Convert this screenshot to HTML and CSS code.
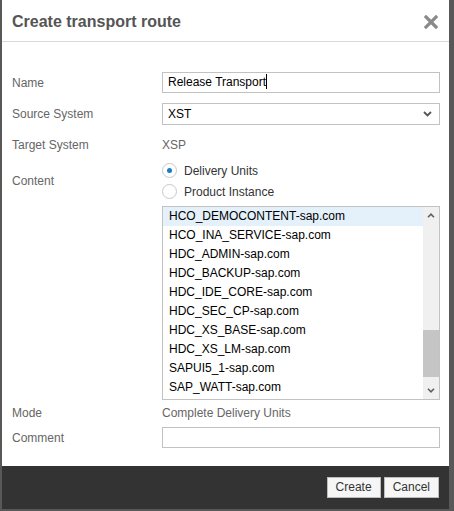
FILE: index.html
```html
<!DOCTYPE html>
<html>
<head>
<meta charset="utf-8">
<link rel="stylesheet" href="styles.css">
</head>
<body>
<div class="dialog">
  <div class="header">
    <div class="title">Create transport route</div>
    <svg class="close" width="14" height="14" viewBox="0 0 14 14"><path d="M2 2 L12 12 M12 2 L2 12" stroke="#8a8a8a" stroke-width="3.2" stroke-linecap="square" fill="none"/></svg>
  </div>
  <div class="body">
    <div class="row r-name">
      <div class="label">Name</div>
      <div class="field"><div class="input">Release Transport<span class="caret"></span></div></div>
    </div>
    <div class="row r-source">
      <div class="label">Source System</div>
      <div class="field"><div class="select"><span>XST</span><svg width="9" height="6" viewBox="0 0 9 6"><path d="M1 1 L4.5 4.5 L8 1" stroke="#555" stroke-width="1.8" fill="none"/></svg></div></div>
    </div>
    <div class="row r-target">
      <div class="label">Target System</div>
      <div class="field value">XSP</div>
    </div>
    <div class="row r-content">
      <div class="label label-content">Content</div>
      <div class="field">
        <div class="radio"><span class="dot on"></span><span>Delivery Units</span></div>
        <div class="radio"><span class="dot"></span><span>Product Instance</span></div>
        <div class="listbox">
          <div class="items">
            <div class="item sel">HCO_DEMOCONTENT-sap.com</div>
            <div class="item">HCO_INA_SERVICE-sap.com</div>
            <div class="item">HDC_ADMIN-sap.com</div>
            <div class="item">HDC_BACKUP-sap.com</div>
            <div class="item">HDC_IDE_CORE-sap.com</div>
            <div class="item">HDC_SEC_CP-sap.com</div>
            <div class="item">HDC_XS_BASE-sap.com</div>
            <div class="item">HDC_XS_LM-sap.com</div>
            <div class="item">SAPUI5_1-sap.com</div>
            <div class="item">SAP_WATT-sap.com</div>
          </div>
          <div class="scrollbar">
            <div class="arrow"><svg width="8" height="5" viewBox="0 0 8 5"><path d="M1 4.2 L4 1.2 L7 4.2" stroke="#606060" stroke-width="1.6" fill="none"/></svg></div>
            <div class="track"><div class="thumb"></div></div>
            <div class="arrow"><svg width="8" height="5" viewBox="0 0 8 5"><path d="M1 0.8 L4 3.8 L7 0.8" stroke="#606060" stroke-width="1.6" fill="none"/></svg></div>
          </div>
        </div>
      </div>
    </div>
    <div class="row r-mode">
      <div class="label">Mode</div>
      <div class="field value">Complete Delivery Units</div>
    </div>
    <div class="row r-comment">
      <div class="label">Comment</div>
      <div class="field"><div class="input"></div></div>
    </div>
  </div>
  <div class="footer">
    <button class="btn">Create</button>
    <button class="btn">Cancel</button>
  </div>
</div>
</body>
</html>
```
FILE: styles.css
```css
html, body {
  margin: 0;
  padding: 0;
  background: #fff;
}
body {
  font-family: "Liberation Sans", Arial, sans-serif;
  font-size: 12px;
}
.dialog {
  width: 454px;
  height: 511px;
  box-sizing: border-box;
  border-left: 2px solid #585858;
  border-right: 5px solid #585858;
  border-bottom: 2px solid #585858;
  display: flex;
  flex-direction: column;
  background: #fff;
}
.header {
  height: 41px;
  flex: none;
  border-bottom: 1px solid #d9d9d9;
  display: flex;
  align-items: center;
  justify-content: space-between;
  padding: 3px 11px 0 10px;
  box-sizing: content-box;
  height: 38px;
}
.title {
  font-size: 16px;
  font-weight: bold;
  color: #555;
}
.close {
  display: block;
}
.body {
  flex: 1;
  padding: 30px 9px 0 10px;
}
.row {
  display: flex;
  align-items: center;
}
.label {
  width: 150px;
  flex: none;
  color: #666;
}
.field {
  flex: 1;
  min-width: 0;
}
.value {
  color: #666;
}
.input {
  height: 21px;
  box-sizing: border-box;
  border: 1px solid #c2c2c2;
  padding: 0 5px;
  line-height: 19px;
  color: #000;
}
.caret {
  display: inline-block;
  width: 1px;
  height: 15px;
  background: #000;
  vertical-align: -3px;
}
.select {
  height: 22px;
  box-sizing: border-box;
  border: 1px solid #c2c2c2;
  padding: 0 7px 0 5px;
  display: flex;
  align-items: center;
  justify-content: space-between;
  color: #000;
}
.r-name { height: 21px; }
.r-source { height: 22px; margin-top: 10px; }
.r-target { height: 19px; margin-top: 10px; }
.r-content { margin-top: 6px; align-items: flex-start; }
.label-content { margin-top: 11px; line-height: 20px; }
.r-mode { height: 19px; margin-top: 3px; }
.r-comment { height: 21px; margin-top: 5px; }
.radio {
  height: 21px;
  display: flex;
  align-items: center;
  color: #333;
}
.dot {
  width: 15px;
  height: 15px;
  box-sizing: border-box;
  border: 1px solid #c8c8c8;
  border-radius: 50%;
  background: #fff;
  margin-right: 7px;
  display: flex;
  align-items: center;
  justify-content: center;
}
.dot.on::after {
  content: "";
  width: 5px;
  height: 5px;
  border-radius: 50%;
  background: #1a7cc4;
}
.listbox {
  margin-top: 4px;
  height: 194px;
  box-sizing: border-box;
  border: 1px solid #c2c2c2;
  display: flex;
  overflow: hidden;
}
.items {
  flex: 1;
  min-width: 0;
}
.item {
  height: 19px;
  line-height: 19px;
  padding-left: 6px;
  color: #000;
  white-space: nowrap;
}
.item.sel {
  background: #e4f0fa;
}
.scrollbar {
  width: 16px;
  flex: none;
  background: #f0f0f0;
  display: flex;
  flex-direction: column;
}
.arrow {
  height: 17px;
  display: flex;
  align-items: center;
  justify-content: center;
  flex: none;
}
.track {
  flex: 1;
}
.thumb {
  margin-top: 106px;
  height: 47px;
  background: #c5c5c5;
}
.footer {
  height: 43px;
  flex: none;
  background: #333;
  display: flex;
  justify-content: flex-end;
  align-items: flex-start;
  gap: 3px;
  padding: 11px 10px 0 0;
  box-sizing: border-box;
}
.btn {
  height: 21px;
  padding: 0 8px;
  background: #f6f6f6;
  border: 1px solid #bdbdbd;
  border-radius: 0;
  font-family: "Liberation Sans", Arial, sans-serif;
  font-size: 12px;
  color: #333;
  line-height: 19px;
  margin: 0;
}
```
